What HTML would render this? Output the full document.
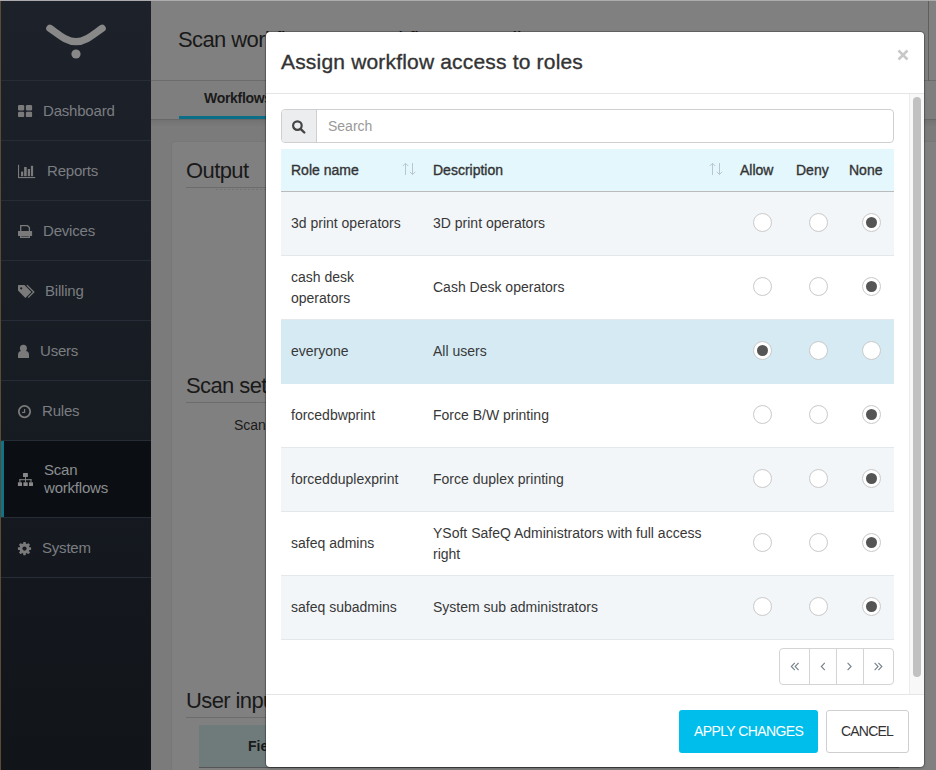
<!DOCTYPE html>
<html><head><meta charset="utf-8">
<style>
*{box-sizing:border-box;margin:0;padding:0}
html,body{width:936px;height:770px;overflow:hidden;font-family:"Liberation Sans",sans-serif;background:#7b7b7b;position:relative}
.a{position:absolute}
.nw{white-space:nowrap}
/* sidebar */
#side{left:0;top:0;width:151px;height:770px;background:linear-gradient(#1c212a,#1a1f27 30%,#14181e 75%,#111419)}
.sep{left:1px;width:150px;height:1px;background:#272d36}
.it{left:0;font-size:15px;color:#7b7d81;white-space:nowrap;letter-spacing:-0.2px}
.ic{fill:#7a7a7a}
/* page */
.ttl{font-size:22px;color:#191919;white-space:nowrap;letter-spacing:-0.6px}
.ln{height:1px;background:#6c6c6c}
/* modal */
#modal{left:266px;top:32px;width:658px;height:735px;background:#fff;border-radius:4px;overflow:hidden;box-shadow:0 0 0 1px rgba(0,0,0,.22),0 1px 3px rgba(0,0,0,.25)}
.txt{font-size:14px;color:#383838;white-space:nowrap}
.th{font-size:14px;color:#333;white-space:nowrap;-webkit-text-stroke:0.35px #333}
.row{left:15px;width:613px;height:64px;border-bottom:1px solid #e4e8eb}
.rd{width:19px;height:19px;border-radius:50%;border:1px solid #c9c9c9;background:#fff}
.rd.on::after{content:"";position:absolute;left:3px;top:3px;width:11px;height:11px;border-radius:50%;background:#555}
.pg{top:616px;height:37px;border:1px solid #d4d4d4}
</style></head><body>

<!-- page background -->
<div class="a" style="left:151px;top:0;width:785px;height:81px;background:#808080;border-bottom:1px solid #6c6c6c"></div>
<div class="a ttl" style="left:178px;top:27px">Scan workflows</div><div class="a ttl" style="left:338px;top:27px">›</div><div class="a ttl" style="left:360px;top:27px">Workflow</div><div class="a ttl" style="left:470px;top:27px">›</div><div class="a ttl" style="left:491px;top:27px">Edit</div>
<div class="a" style="left:151px;top:81px;width:785px;height:39px;background:#7e7e7e;border-bottom:1px solid #686868"></div>
<div class="a" style="left:928px;top:1px;width:1px;height:80px;background:#5e5e5e"></div>
<div class="a nw" style="left:204px;top:90px;font-size:14px;font-weight:bold;color:#1a1a1a;letter-spacing:-0.3px">Workflows</div>
<div class="a" style="left:179px;top:116px;width:120px;height:3px;background:#0b6e87"></div>
<!-- content panel -->
<div class="a" style="left:171px;top:141px;width:800px;height:640px;background:#808080;border:1px solid #777;border-radius:3px"></div>
<div class="a ttl" style="left:186px;top:158px">Output</div>
<div class="a ln" style="left:186px;top:187px;width:700px"></div>
<div class="a" style="left:216px;top:189px;width:60px;height:1px;background:repeating-linear-gradient(90deg,#737373 0 2px,transparent 2px 4px)"></div>
<div class="a" style="left:151px;top:120px;width:785px;height:7px;background:linear-gradient(rgba(0,0,0,.07),rgba(0,0,0,0))"></div>
<div class="a ttl" style="left:186px;top:373px">Scan settings</div>
<div class="a ln" style="left:186px;top:402px;width:700px"></div>
<div class="a nw" style="left:234px;top:417px;font-size:14px;color:#1a1a1a">Scan</div>
<div class="a ttl" style="left:186px;top:688px">User input</div>
<div class="a ln" style="left:186px;top:717px;width:700px"></div>
<div class="a" style="left:199px;top:725px;width:700px;height:43px;background:#6f7b7b;border-bottom:1px solid #555"></div>
<div class="a nw" style="left:248px;top:738px;font-size:14px;font-weight:bold;color:#1a1a1a">Field</div>

<!-- sidebar -->
<div id="side" class="a">
  <div class="a" style="left:0;top:0;width:1px;height:770px;background:#5b4b32"></div>
  <svg class="a" style="left:0;top:0" width="151" height="80">
    <path d="M49.8,28.3 C60,35.5 67,41.7 76,41.7 C85,41.7 92,35.5 102.2,28.3" stroke="#888" stroke-width="7.2" fill="none" stroke-linecap="round"/>
    <circle cx="76" cy="54" r="4.6" fill="#888"/>
  </svg>
  <div class="a sep" style="top:80px"></div>
  <div class="a sep" style="top:140px"></div>
  <div class="a sep" style="top:200px"></div>
  <div class="a sep" style="top:260px"></div>
  <div class="a sep" style="top:320px"></div>
  <div class="a sep" style="top:380px"></div>
  <div class="a sep" style="top:440px"></div>
  <div class="a" style="left:1px;top:441px;width:150px;height:76px;background:#0b0f13"></div>
  <div class="a" style="left:1px;top:441px;width:3px;height:76px;background:#0e7289"></div>
  <div class="a sep" style="top:517px"></div>
  <div class="a sep" style="top:577px"></div>

  <div class="a it" style="left:43px;top:102px">Dashboard</div>
  <div class="a it" style="left:47px;top:162px">Reports</div>
  <div class="a it" style="left:43px;top:222px">Devices</div>
  <div class="a it" style="left:45px;top:282px">Billing</div>
  <div class="a it" style="left:40px;top:342px">Users</div>
  <div class="a it" style="left:42px;top:402px">Rules</div>
  <div class="a it" style="left:44px;top:461px;line-height:18px;color:#8c8e91">Scan<br>workflows</div>
  <div class="a it" style="left:42px;top:539px">System</div>

  <!-- icons -->
  <svg class="a" style="left:0;top:0" width="151" height="600">
    <g class="ic">
      <!-- dashboard -->
      <rect x="18" y="105" width="6.2" height="5.4" rx="1.2"/><rect x="25.9" y="105" width="6.2" height="5.4" rx="1.2"/>
      <rect x="18" y="111.8" width="6.2" height="5.3" rx="1.2"/><rect x="25.9" y="111.8" width="6.2" height="5.3" rx="1.2"/>
      <!-- reports -->
      <rect x="18" y="164.8" width="1.1" height="13.2"/><rect x="18" y="177" width="17.2" height="1.1"/>
      <rect x="21" y="171.6" width="2.2" height="4.6"/><rect x="24.1" y="167" width="2.6" height="9.2"/><rect x="27.8" y="169" width="2.2" height="7.2"/><rect x="30.9" y="165.8" width="2.2" height="10.4"/>
      <!-- devices printer -->
      <path d="M20.7,231 V225.7 H27.6 L29.4,227.5 V231" fill="none" stroke="#7a7a7a" stroke-width="1.3"/>
      <path d="M18,231 H32.1 V236 H30 V235 H20 V236 H18 Z"/>
      <path d="M20.6,235.6 H29.4 V237.4 H20.6 Z" fill="none" stroke="#7a7a7a" stroke-width="1.2"/>
      <!-- billing tags -->
      <path fill-rule="evenodd" d="M18.6,285 H24.4 L31.4,292 L25.4,298 L18,290.6 V285.6 Z M21.2,287.2 a1.1,1.1 0 1,0 0.01,0 Z"/>
      <path d="M26.9,285.1 L33.8,292 L28.2,297.6" fill="none" stroke="#7a7a7a" stroke-width="1.3"/>
      <!-- users -->
      <circle cx="23.4" cy="348.2" r="3.5"/>
      <path d="M18,358 V355 Q18,351 21.5,351 H25.5 Q29,351 29,355 V358 Z"/>
      <!-- rules clock -->
      <circle cx="24.5" cy="411.6" r="5.7" fill="none" stroke="#7a7a7a" stroke-width="1.8"/>
      <path d="M24.6,409 V412.4 H22.1" fill="none" stroke="#7a7a7a" stroke-width="1.2"/>
      <!-- scan workflows sitemap -->
      <g fill="#888">
      <rect x="23" y="473" width="4.9" height="4" rx="0.6"/>
      <rect x="25" y="477" width="0.9" height="5"/>
      <rect x="19.4" y="479.2" width="12" height="1"/>
      <rect x="19.4" y="479.2" width="1" height="3"/><rect x="30.5" y="479.2" width="1" height="3"/>
      <rect x="17.9" y="482.2" width="4.1" height="3.8" rx="0.5"/><rect x="23.4" y="482.2" width="4.3" height="3.8" rx="0.5"/><rect x="29" y="482.2" width="4" height="3.8" rx="0.5"/>
      </g>
      <!-- system cog -->
      <g transform="translate(24.5,548.6)">
        <circle r="5"/>
        <rect x="-1.3" y="-6.6" width="2.6" height="13.2" rx="0.4"/>
        <rect x="-1.3" y="-6.6" width="2.6" height="13.2" rx="0.4" transform="rotate(45)"/>
        <rect x="-1.3" y="-6.6" width="2.6" height="13.2" rx="0.4" transform="rotate(90)"/>
        <rect x="-1.3" y="-6.6" width="2.6" height="13.2" rx="0.4" transform="rotate(135)"/>
        <circle r="2.1" fill="#161a21"/>
      </g>
    </g>
  </svg>
</div>
<div class="a" style="left:0;top:0;width:936px;height:1px;background:#adabad"></div>

<!-- modal -->
<div id="modal" class="a">
  <div class="a nw" style="left:15px;top:18px;font-size:21px;letter-spacing:0.18px;color:#333;-webkit-text-stroke:0.35px #333">Assign workflow access to roles</div>
  <svg class="a" style="left:630px;top:16px" width="14" height="14"><path d="M2.5,2.5 L11.5,11.5 M11.5,2.5 L2.5,11.5" stroke="#c8c8c8" stroke-width="2.6"/></svg>
  <div class="a" style="left:0;top:61px;width:658px;height:1px;background:#e5e5e5"></div>

  <!-- body -->
  <!-- search -->
  <div class="a" style="left:15px;top:77px;width:613px;height:34px;border:1px solid #cfcfcf;border-radius:4px;overflow:hidden">
    <div class="a" style="left:0;top:0;width:35px;height:32px;background:#ecedef;border-right:1px solid #cfcfcf"></div>
  </div>
  <svg class="a" style="left:25px;top:87px" width="16" height="16"><circle cx="6.4" cy="6.6" r="4.3" fill="none" stroke="#444" stroke-width="2.2"/><path d="M9.5,9.8 L13.3,13.5" stroke="#444" stroke-width="2.4" stroke-linecap="round"/></svg>
  <div class="a nw" style="left:62px;top:86px;font-size:14px;color:#999">Search</div>

  <!-- table header -->
  <div class="a" style="left:15px;top:117px;width:613px;height:43px;background:#e3f7fd;border-bottom:1px solid #bbb"></div>
  <div class="a th" style="left:25px;top:130px">Role name</div>
  <div class="a th" style="left:167px;top:130px">Description</div>
  <div class="a th" style="left:474px;top:130px">Allow</div>
  <div class="a th" style="left:530px;top:130px">Deny</div>
  <div class="a th" style="left:583px;top:130px">None</div>
  <svg class="a" style="left:134px;top:130px" width="18" height="14"><g stroke="#b4c0c6" stroke-width="0.9" fill="none"><path d="M5.5,1.5 V13 M2.8,4 L5.5,1.3 L8.2,4"/><path d="M12.5,1 V12.5 M9.8,9.8 L12.5,12.5 L15.2,9.8"/></g></svg>
  <svg class="a" style="left:441px;top:130px" width="18" height="14"><g stroke="#b4c0c6" stroke-width="0.9" fill="none"><path d="M5.5,1.5 V13 M2.8,4 L5.5,1.3 L8.2,4"/><path d="M12.5,1 V12.5 M9.8,9.8 L12.5,12.5 L15.2,9.8"/></g></svg>

  <!-- rows -->
  <div class="a row" style="top:160px;background:#f3f6f9"></div>
  <div class="a row" style="top:224px;background:#fff"></div>
  <div class="a row" style="top:288px;background:#d5eaf3;border-bottom-color:#d5eaf3"></div>
  <div class="a row" style="top:352px;background:#fff"></div>
  <div class="a row" style="top:416px;background:#f3f6f9"></div>
  <div class="a row" style="top:480px;background:#fff"></div>
  <div class="a row" style="top:544px;background:#f3f6f9"></div>

  <div class="a txt" style="left:25px;top:183px">3d print operators</div>
  <div class="a txt" style="left:167px;top:183px">3D print operators</div>
  <div class="a txt" style="left:25px;top:235px;line-height:21px">cash desk<br>operators</div>
  <div class="a txt" style="left:167px;top:247px">Cash Desk operators</div>
  <div class="a txt" style="left:25px;top:311px">everyone</div>
  <div class="a txt" style="left:167px;top:311px">All users</div>
  <div class="a txt" style="left:25px;top:375px">forcedbwprint</div>
  <div class="a txt" style="left:167px;top:375px">Force B/W printing</div>
  <div class="a txt" style="left:25px;top:439px">forcedduplexprint</div>
  <div class="a txt" style="left:167px;top:439px">Force duplex printing</div>
  <div class="a txt" style="left:25px;top:503px">safeq admins</div>
  <div class="a txt" style="left:167px;top:491px;line-height:21px">YSoft SafeQ Administrators with full access<br>right</div>
  <div class="a txt" style="left:25px;top:567px">safeq subadmins</div>
  <div class="a txt" style="left:167px;top:567px">System sub administrators</div>

  <!-- radios: centers x 762,818,871 (abs) → 496,552,605 rel; y centers 223+64k abs → 191 rel -->
  <div class="a rd" style="left:487px;top:181px"></div><div class="a rd" style="left:543px;top:181px"></div><div class="a rd on" style="left:596px;top:181px"></div>
  <div class="a rd" style="left:487px;top:245px"></div><div class="a rd" style="left:543px;top:245px"></div><div class="a rd on" style="left:596px;top:245px"></div>
  <div class="a rd on" style="left:487px;top:309px"></div><div class="a rd" style="left:543px;top:309px"></div><div class="a rd" style="left:596px;top:309px"></div>
  <div class="a rd" style="left:487px;top:373px"></div><div class="a rd" style="left:543px;top:373px"></div><div class="a rd on" style="left:596px;top:373px"></div>
  <div class="a rd" style="left:487px;top:437px"></div><div class="a rd" style="left:543px;top:437px"></div><div class="a rd on" style="left:596px;top:437px"></div>
  <div class="a rd" style="left:487px;top:501px"></div><div class="a rd" style="left:543px;top:501px"></div><div class="a rd on" style="left:596px;top:501px"></div>
  <div class="a rd" style="left:487px;top:565px"></div><div class="a rd" style="left:543px;top:565px"></div><div class="a rd on" style="left:596px;top:565px"></div>

  <!-- pagination -->
  <div class="a" style="left:513px;top:616px;width:115px;height:37px;border:1px solid #d4d4d4;border-radius:4px"></div>
  <div class="a" style="left:543px;top:617px;width:1px;height:35px;background:#d4d4d4"></div>
  <div class="a" style="left:570px;top:617px;width:1px;height:35px;background:#d4d4d4"></div>
  <div class="a" style="left:597px;top:617px;width:1px;height:35px;background:#d4d4d4"></div>
  <svg class="a" style="left:513px;top:616px" width="115" height="37"><g stroke="#75808a" stroke-width="1.1" fill="none">
    <path d="M15.8,14.8 L12.3,18.5 L15.8,22.2 M19.6,14.8 L16.1,18.5 L19.6,22.2"/>
    <path d="M45.8,14.8 L42.3,18.5 L45.8,22.2"/>
    <path d="M68.6,14.8 L72.1,18.5 L68.6,22.2"/>
    <path d="M95.6,14.8 L99.1,18.5 L95.6,22.2 M99.4,14.8 L102.9,18.5 L99.4,22.2"/>
  </g></svg>

  <!-- scrollbar -->
  <div class="a" style="left:643px;top:62px;width:15px;height:600px;background:#f8f8f8;border-left:1px solid #ececec"></div>
  <div class="a" style="left:647px;top:65px;width:8px;height:580px;background:#c1c1c1;border-radius:4px"></div>

  <!-- footer -->
  <div class="a" style="left:0;top:662px;width:658px;height:1px;background:#e5e5e5"></div>
  <div class="a" style="left:413px;top:678px;width:139px;height:43px;background:#00beeb;border-radius:3px"></div>
  <div class="a nw" style="left:428px;top:691px;font-size:14px;color:#fff;letter-spacing:-0.6px">APPLY CHANGES</div>
  <div class="a" style="left:560px;top:678px;width:83px;height:43px;background:#fff;border:1px solid #cfcfcf;border-radius:3px"></div>
  <div class="a nw" style="left:575px;top:691px;font-size:14px;color:#333;letter-spacing:-0.8px">CANCEL</div>
</div>
</body></html>
